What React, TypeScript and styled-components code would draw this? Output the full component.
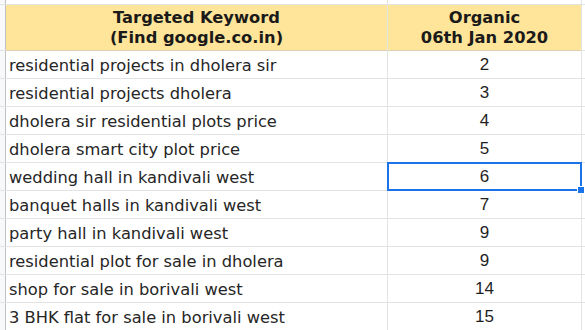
import React from "react";
import styled, { createGlobalStyle } from "styled-components";

const rows: [string, string][] = [
  ["residential projects in dholera sir", "2"],
  ["residential projects dholera", "3"],
  ["dholera sir residential plots price", "4"],
  ["dholera smart city plot price", "5"],
  ["wedding hall in kandivali west", "6"],
  ["banquet halls in kandivali west", "7"],
  ["party hall in kandivali west", "9"],
  ["residential plot for sale in dholera", "9"],
  ["shop for sale in borivali west", "14"],
  ["3 BHK flat for sale in borivali west", "15"],
];

const SELECTED = 4;

const GlobalStyle = createGlobalStyle`
  html, body {
    margin: 0;
    padding: 0;
    background: #fff;
    overflow: hidden;
  }
`;

const Sheet = styled.div`
  display: grid;
  grid-template-columns: 5px 381px 193px 1fr;
  grid-template-rows: 4px 45px repeat(10, 27px);
  gap: 1px;
  width: 585px;
  height: 330px;
  background: #e2e3e3;
  overflow: hidden;
`;

const Cell = styled.div`
  background: #fff;
`;

const RowHead = styled.div`
  background: #f8f9fa;
  box-shadow: 1px 0 0 #c0c0c0;
  position: relative;
  z-index: 1;
`;

const HeaderCell = styled.div`
  background: #ffe599;
  display: flex;
  align-items: center;
  justify-content: center;
  text-align: center;
  font-family: "DejaVu Sans", Verdana, sans-serif;
  font-weight: bold;
  font-size: 16.3px;
  line-height: 20px;
  color: #1a1a1a;
  box-shadow: 0 1px 0 #d9d0b0;
`;

const KeywordCell = styled.div`
  background: #fff;
  display: flex;
  align-items: flex-end;
  padding: 0 0 3px 3px;
  font-family: "DejaVu Sans", Verdana, sans-serif;
  font-size: 16.3px;
  color: #262626;
  white-space: nowrap;
`;

const RankCell = styled.div<{ $selected?: boolean }>`
  position: relative;
  background: #fff;
  display: flex;
  align-items: flex-end;
  justify-content: center;
  padding-bottom: 3px;
  font-family: "Liberation Sans", Arial, sans-serif;
  font-size: 17px;
  color: #1f1f1f;

  ${({ $selected }) =>
    $selected &&
    `
    &::before {
      content: "";
      position: absolute;
      left: -1px;
      top: -1px;
      right: -1px;
      bottom: -1px;
      border: 2px solid #1a73e8;
      z-index: 2;
    }
    &::after {
      content: "";
      position: absolute;
      right: -4px;
      bottom: -4px;
      width: 6px;
      height: 6px;
      background: #1a73e8;
      border: 1px solid #fff;
      z-index: 3;
    }
  `}
`;

export default function App() {
  return (
    <>
      <GlobalStyle />
      <Sheet>
        <RowHead />
        <Cell />
        <Cell />
        <Cell />

        <RowHead />
        <HeaderCell>
          Targeted Keyword
          <br />
          (Find google.co.in)
        </HeaderCell>
        <HeaderCell>
          Organic
          <br />
          06th Jan 2020
        </HeaderCell>
        <Cell />

        {rows.map(([keyword, rank], i) => (
          <React.Fragment key={i}>
            <RowHead />
            <KeywordCell>{keyword}</KeywordCell>
            <RankCell $selected={i === SELECTED}>{rank}</RankCell>
            <Cell />
          </React.Fragment>
        ))}
      </Sheet>
    </>
  );
}
